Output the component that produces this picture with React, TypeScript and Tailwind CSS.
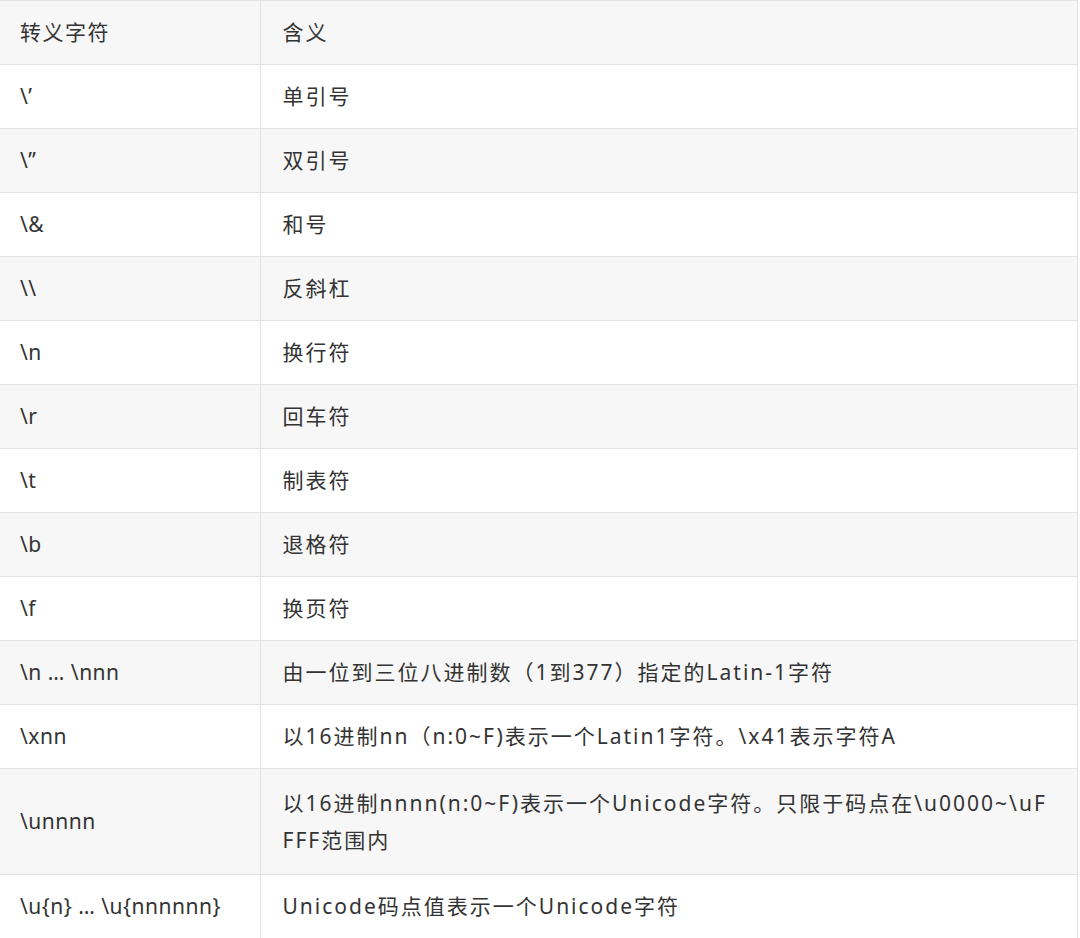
const rows: [string, string][] = [
  ["\\\u2019", "单引号"],
  ["\\\u201d", "双引号"],
  ["\\&", "和号"],
  ["\\\\", "反斜杠"],
  ["\\n", "换行符"],
  ["\\r", "回车符"],
  ["\\t", "制表符"],
  ["\\b", "退格符"],
  ["\\f", "换页符"],
  ["\\n \u2026 \\nnn", "由一位到三位八进制数（1到377）指定的Latin-1字符"],
  ["\\xnn", "以16进制nn（n:0~F)表示一个Latin1字符。\\x41表示字符A"],
  ["\\unnnn", "以16进制nnnn(n:0~F)表示一个Unicode字符。只限于码点在\\u0000~\\uFFFF范围内"],
  ["\\u{n} \u2026 \\u{nnnnnn}", "Unicode码点值表示一个Unicode字符"],
];

export default function App() {
  return (
    <div
      className="w-[1080px] h-[938px] overflow-hidden bg-white text-[#333]"
      style={{ fontFamily: '"Noto Sans", "Noto Sans CJK SC", sans-serif' }}
    >
      <table className="w-[1078px] border-collapse border-t border-r border-[#e2e2e2] text-[21px]">
        <thead>
          <tr className="bg-[#f7f7f7]">
            <th className="w-[260px] h-[64px] border-r border-b border-[#e2e2e2] pl-[20px] text-left font-normal tracking-[1.5px]">
              转义字符
            </th>
            <th className="h-[64px] border-b border-[#e2e2e2] pl-[22px] text-left font-normal tracking-[2px]">
              含义
            </th>
          </tr>
        </thead>
        <tbody>
          {rows.map(([code, meaning], i) => (
            <tr key={i} className={i % 2 === 1 ? "bg-[#f7f7f7]" : "bg-white"}>
              <td
                className={`border-r border-b border-[#e2e2e2] pl-[20px] align-middle tracking-[0.5px] ${
                  i === 11 ? "h-[106px]" : "h-[64px]"
                }`}
              >
                {code}
              </td>
              <td className="border-b border-[#e2e2e2] pl-[22px] pr-[24px] leading-[37px] align-middle break-all tracking-[2px]">
                {meaning}
              </td>
            </tr>
          ))}
        </tbody>
      </table>
    </div>
  );
}
